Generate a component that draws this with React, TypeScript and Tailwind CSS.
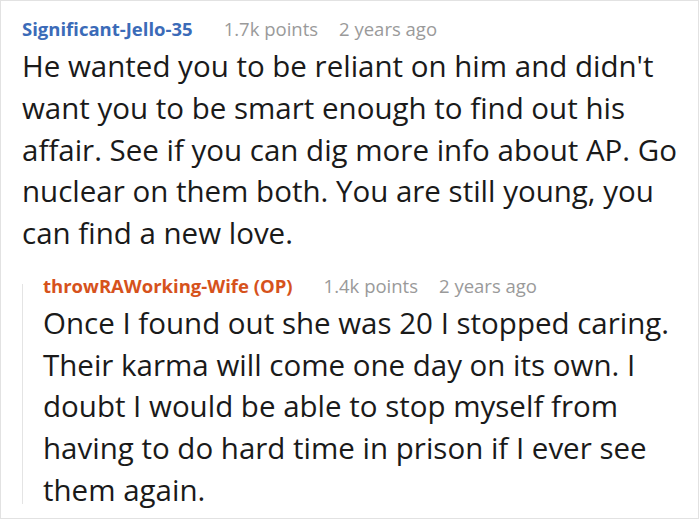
const font = { fontFamily: '"Open Sans", "Noto Sans", sans-serif' };

type Comment = {
  author: string;
  authorClass: string;
  points: string;
  age: string;
  body: string;
};

const top: Comment = {
  author: 'Significant-Jello-35',
  authorClass: 'text-[#3b6bb8]',
  points: '1.7k points',
  age: '2 years ago',
  body: "He wanted you to be reliant on him and didn't want you to be smart enough to find out his affair. See if you can dig more info about AP. Go nuclear on them both. You are still young, you can find a new love.",
};

const reply: Comment = {
  author: 'throwRAWorking-Wife (OP)',
  authorClass: 'text-[#d6521c]',
  points: '1.4k points',
  age: '2 years ago',
  body: 'Once I found out she was 20 I stopped caring. Their karma will come one day on its own. I doubt I would be able to stop myself from having to do hard time in prison if I ever see them again.',
};

function CommentBlock({ c }: { c: Comment }) {
  return (
    <div>
      <div className="flex items-baseline text-[18.5px] leading-[32px]">
        <span className={`font-bold ${c.authorClass}`}>{c.author}</span>
        <span className="ml-[31px] text-[#9a9a9a]">{c.points}</span>
        <span className="ml-[21px] text-[#9a9a9a]">{c.age}</span>
      </div>
      <p className="text-[29.5px] leading-[41.75px] text-[#1a1a1a]">{c.body}</p>
    </div>
  );
}

export default function App() {
  return (
    <div className="w-[699px] h-[519px] border border-[#e2e2e2] bg-white overflow-hidden" style={font}>
      <div className="pl-[21px] pr-[8px] pt-[12px]">
        <CommentBlock c={top} />
        <div className="mt-[16px] flex">
          <div className="w-px shrink-0 bg-[#e4e4e4] mt-[14px] mb-[7px]" />
          <div className="flex-1 pl-[20px]">
            <CommentBlock c={reply} />
          </div>
        </div>
      </div>
    </div>
  );
}
